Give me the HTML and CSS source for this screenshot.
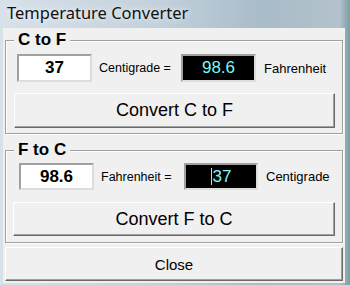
FILE: index.html
```html
<!DOCTYPE html>
<html lang="en">
<head>
  <meta charset="UTF-8" />
  <title>Temperature Converter</title>
  <link rel="stylesheet" href="styles.css">
</head>
<body>
  <div class="window">
    <div class="titlebar">Temperature Converter</div>
    <div class="client">
      <fieldset class="group">
        <legend>C to F</legend>
        <div class="row">
          <input type="text" class="field" value="37" />
          <span class="label">Centigrade =</span>
          <div class="result">98.6</div>
          <span class="unit">Fahrenheit</span>
        </div>
        <button class="btn btn-convert">Convert C to F</button>
      </fieldset>

      <fieldset class="group group-second">
        <legend>F to C</legend>
        <div class="row">
          <input type="text" class="field" value="98.6" />
          <span class="label">Fahrenheit =</span>
          <div class="result"><span class="caret"></span>37</div>
          <span class="unit">Centigrade</span>
        </div>
        <button class="btn btn-convert">Convert F to C</button>
      </fieldset>

      <button class="btn btn-close">Close</button>
    </div>
  </div>
</body>
</html>
```

FILE: styles.css
```css
body {
  margin: 0;
  font-family: "Liberation Sans", Arial, sans-serif;
  overflow: hidden;
}
.window {
  width: 350px;
  height: 285px;
  display: flex;
  flex-direction: column;
  background: linear-gradient(to right, #d7e1ea 0%, #c3d1dc 45%, #a9bcc9 75%, #b3c2cc 97%, #7b9da2 100%);
}
.titlebar {
  height: 28px;
  line-height: 25px;
  padding-left: 7px;
  font-family: "Noto Sans", sans-serif;
  font-size: 16.5px;
  color: #111;
  text-shadow: 0 0 6px #fff;
}
.client {
  flex: 1;
  margin: 0 5px 2px 3px;
  padding: 2px 2px 0 2px;
  background: #f0f0f0;
  display: flex;
  flex-direction: column;
}
.group {
  margin: 0;
  padding: 0 7px 5px 8px;
  border: 1px solid #a0a0a0;
  box-shadow: 1px 1px 0 #fff, inset 1px 1px 0 #fff;
  display: flex;
  flex-direction: column;
}
.group legend {
  padding: 0 4px;
  font-size: 17px;
  font-weight: bold;
  line-height: 20px;
  background: #f0f0f0;
}
.row {
  display: flex;
  align-items: center;
  height: 28px;
  margin-top: 4px;
  padding-left: 3px;
}
.field, .result {
  box-sizing: border-box;
  width: 75px;
  height: 100%;
  margin: 0;
  border: 2px solid;
  border-color: #a0a0a0 #dcdcdc #dcdcdc #a0a0a0;
  text-align: center;
  font-family: "Liberation Sans", Arial, sans-serif;
  font-size: 17px;
}
.field {
  background: #fff;
  font-weight: bold;
  color: #000;
  padding: 0;
}
.result {
  display: flex;
  align-items: center;
  justify-content: center;
  background: #000;
  color: #7ff5f5;
}
.caret {
  display: inline-block;
  width: 1px;
  height: 17px;
  margin-right: 1px;
  background: #d8d8d8;
}
.label {
  width: 82px;
  margin-left: 7px;
  font-size: 12.5px;
}
.unit {
  margin-left: 8px;
  font-size: 13px;
}
.btn {
  box-sizing: border-box;
  margin: 0;
  background: #f0f0f0;
  border: 1px solid;
  border-color: #fff #696969 #696969 #fff;
  box-shadow: inset -1px -1px 0 #a0a0a0;
  font-family: "Liberation Sans", Arial, sans-serif;
  color: #000;
}
.btn-convert {
  height: 35px;
  margin-top: 11px;
  font-size: 18px;
}
.group-second {
  margin-top: 6px;
  padding-bottom: 6px;
}
.group-second .row {
  height: 27px;
  margin-top: 3px;
  padding-left: 5px;
}
.group-second .result {
  width: 74px;
}
.group-second .label {
  width: 83px;
}
.group-second .btn-convert {
  height: 34px;
  margin-top: 12px;
  margin-left: -1px;
}
.btn-close {
  height: 34px;
  margin-top: 4px;
  margin-right: 0;
  font-size: 15px;
}
```
